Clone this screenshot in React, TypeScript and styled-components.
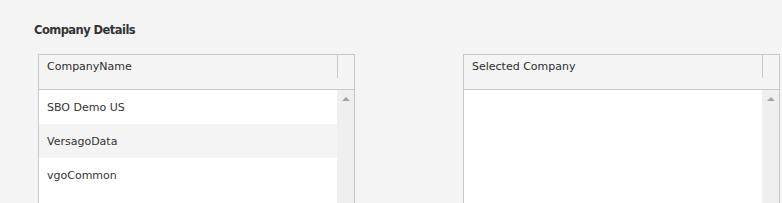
import React from 'react';
import styled, { createGlobalStyle } from 'styled-components';

const companies = ['SBO Demo US', 'VersagoData', 'vgoCommon', 'Vgo Test'];

const GlobalStyle = createGlobalStyle`
  html, body {
    margin: 0;
    padding: 0;
    background: #f4f4f4;
  }
  body {
    font-family: 'DejaVu Sans', Verdana, sans-serif;
    color: #333333;
  }
`;

const App: React.FC = () => {
  return (
    <Page>
      <GlobalStyle />
      <Title>Company Details</Title>
      <Panels>
        <ListPanel title="CompanyName" items={companies.slice(0, 3)} />
        <ListPanel title="Selected Company" items={[]} />
      </Panels>
    </Page>
  );
};

export default App;

type ListPanelProps = {
  title: string;
  items: string[];
};

const ListPanel: React.FC<ListPanelProps> = ({ title, items }) => (
  <Panel>
    <HeaderBar>
      <HeaderCell>{title}</HeaderCell>
    </HeaderBar>
    <Body>
      <Rows>
        {items.map((item, i) => (
          <Row key={item} $alt={i % 2 === 1}>
            {item}
          </Row>
        ))}
      </Rows>
      <ScrollTrack>
        <UpArrow />
      </ScrollTrack>
    </Body>
  </Panel>
);

const Page = styled.div`
  display: flex;
  flex-direction: column;
  padding: 22px 0 0 34px;
  height: 203px;
  box-sizing: border-box;
  overflow: hidden;
`;

const Title = styled.h2`
  margin: 0;
  font-family: 'DejaVu Sans', Verdana, sans-serif;
  font-size: 11.5px;
  font-weight: 700;
  letter-spacing: -0.55px;
  line-height: 16px;
  color: #333333;
`;

const Panels = styled.div`
  display: flex;
  gap: 108px;
  margin: 16px 0 0 4px;
`;

const Panel = styled.div`
  width: 317px;
  flex: none;
  display: flex;
  flex-direction: column;
  border: 1px solid #c8c8c8;
  border-bottom: none;
  box-sizing: border-box;
`;

const HeaderBar = styled.div`
  display: flex;
  height: 34px;
  background: #f4f4f4;
  border-bottom: 1px solid #c8c8c8;
`;

const HeaderCell = styled.div`
  width: 299px;
  height: 23px;
  box-sizing: border-box;
  display: flex;
  align-items: center;
  padding-left: 8px;
  border-right: 1px solid #c8c8c8;
  font-size: 11px;
  color: #2e2e2e;
`;

const Body = styled.div`
  display: flex;
  height: 130px;
  background: #ffffff;
`;

const Rows = styled.div`
  display: flex;
  flex-direction: column;
  width: 298px;
`;

const Row = styled.div<{ $alt: boolean }>`
  height: 34px;
  display: flex;
  align-items: center;
  padding-left: 8px;
  font-size: 11px;
  color: #333333;
  background: ${({ $alt }) => ($alt ? '#f4f4f4' : '#ffffff')};
`;

const ScrollTrack = styled.div`
  width: 17px;
  display: flex;
  justify-content: center;
  padding-top: 7px;
  box-sizing: border-box;
  background: #efefef;
`;

const UpArrow = styled.div`
  width: 0;
  height: 0;
  border-left: 4px solid transparent;
  border-right: 4px solid transparent;
  border-bottom: 4px solid #a3a3a3;
`;
